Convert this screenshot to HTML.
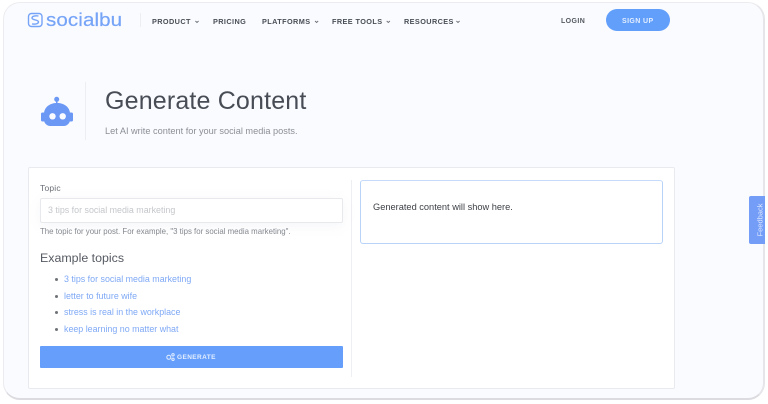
<!DOCTYPE html>
<html lang="en">
<head>
<meta charset="utf-8">
<title>Generate Content - SocialBu</title>
<style>
html,body{margin:0;padding:0;width:768px;height:404px;overflow:hidden;background:#fff}
body{font-family:"Liberation Sans",sans-serif;position:relative}
#wrap{position:absolute;left:0;top:0;width:768px;height:404px;filter:blur(.35px)}
.t{position:absolute;white-space:nowrap;line-height:1}
.box{position:absolute;box-sizing:border-box}
.nav{font-size:7.3px;font-weight:700;letter-spacing:.4px;color:#4a4f57;top:17.500px}
.li{font-size:8.900px;color:#7fa9f5;left:64px}
.dot{position:absolute;left:55px;width:3px;height:3px;border-radius:50%;background:#6f7378}
</style>
</head>
<body>
<div id="wrap">
<div class="box" style="left:3px;top:2px;width:762px;height:398px;border-radius:17px;background:#fafbff;border:1px solid #ececf0;border-bottom:2px solid #dcdce0;border-right:2px solid #e6e6ea"></div>

<svg class="box" style="left:27px;top:12px" width="17" height="16" viewBox="0 0 17 16" fill="none" stroke="#76a4f7" stroke-width="1.400">
<rect x="1.500" y="1.500" width="13.500" height="13" rx="3"/>
<path d="M11.500 4C8.500 3.400 5 4 5 6C5 8.400 11.500 7.400 11.500 9.900C11.500 11.900 8 12.500 5 11.900"/>
</svg>
<div class="t" style="left:45.500px;top:10.500px;font-size:18px;letter-spacing:.1px;color:#76a4f7;-webkit-text-stroke:.2px #76a4f7;transform-origin:left center;transform:scaleX(1.140)">socialbu</div>
<div class="box" style="left:140px;top:13px;width:1px;height:14px;background:#eceef3"></div>

<div class="t nav" style="left:152px">PRODUCT</div>
<div class="t nav" style="left:213px">PRICING</div>
<div class="t nav" style="left:262px">PLATFORMS</div>
<div class="t nav" style="left:332px">FREE TOOLS</div>
<div class="t nav" style="left:404px">RESOURCES</div>
<svg class="box" style="left:0;top:0" width="768" height="40" fill="none" stroke="#6b7078" stroke-width=".9">
<path d="M195.400 21l1.600 1.500L198.600 21M315 21l1.600 1.500L318.200 21M386.700 21l1.600 1.500L389.900 21M456.400 21l1.600 1.500L459.600 21"/>
</svg>
<div class="t" style="left:561px;top:17.500px;font-size:7px;font-weight:700;letter-spacing:.4px;color:#555a62">LOGIN</div>
<div class="box" style="left:606px;top:9px;width:64px;height:22px;border-radius:11px;background:#629ffa"></div>
<div class="t" style="left:622px;top:17.500px;font-size:7px;font-weight:700;letter-spacing:.4px;color:#e4eeff">SIGN UP</div>

<svg class="box" style="left:40px;top:96px" width="34" height="32" viewBox="0 0 34 32">
<circle cx="16.700" cy="3.300" r="2.500" fill="#6b98f5"/>
<rect x="16" y="3" width="1.500" height="6" fill="#6b98f5"/>
<path d="M4 18C4 11 10 7 17 7C24 7 30 11 30 18V24C30 27 27 30 24 30H10C7 30 4 27 4 24Z" fill="#6b98f5"/>
<rect x="1" y="16.500" width="4" height="9" rx="1.500" fill="#6b98f5"/>
<rect x="29" y="16.500" width="4" height="9" rx="1.500" fill="#6b98f5"/>
<circle cx="12.500" cy="20.300" r="3.200" fill="#fafbff"/>
<circle cx="22.700" cy="20.300" r="3.200" fill="#fafbff"/>
</svg>
<div class="box" style="left:85px;top:82px;width:1px;height:58px;background:#eceef3"></div>
<div class="t" style="left:105px;top:89px;font-size:25px;letter-spacing:.17px;color:#474c55">Generate Content</div>
<div class="t" style="left:105px;top:127px;font-size:9.200px;color:#8b8f96">Let AI write content for your social media posts.</div>

<div class="box" style="left:28px;top:167px;width:647px;height:222px;background:#fff;border:1px solid #e9eaf0;border-radius:2px"></div>
<div class="box" style="left:351px;top:180px;width:1px;height:197px;background:#eeeff3"></div>

<div class="t" style="left:40px;top:184px;font-size:8.500px;letter-spacing:.2px;color:#6a6e75">Topic</div>
<div class="box" style="left:40px;top:198px;width:303px;height:25px;background:#fff;border:1px solid #e8e9ed;border-radius:2px;box-shadow:0 3px 12px rgba(200,205,220,.18)"></div>
<div class="t" style="left:48px;top:206px;font-size:8.900px;color:#c5c7cb">3 tips for social media marketing</div>
<div class="t" style="left:40px;top:228px;font-size:7.850px;color:#84888e">The topic for your post. For example, "3 tips for social media marketing".</div>
<div class="t" style="left:40px;top:252px;font-size:12.400px;color:#565a62">Example topics</div>

<div class="dot" style="top:278px"></div><div class="t li" style="top:275px">3 tips for social media marketing</div>
<div class="dot" style="top:295px"></div><div class="t li" style="top:291.500px">letter to future wife</div>
<div class="dot" style="top:311px"></div><div class="t li" style="top:308px">stress is real in the workplace</div>
<div class="dot" style="top:328px"></div><div class="t li" style="top:324.500px">keep learning no matter what</div>

<div class="box" style="left:40px;top:346px;width:303px;height:22px;background:#659ffb;border-radius:1px"></div>
<svg class="box" style="left:166px;top:353px" width="9" height="8" viewBox="0 0 9 8" fill="none" stroke="#e4eeff" stroke-width="1">
<circle cx="2.800" cy="4.300" r="2"/><circle cx="7" cy="1.800" r="1.200"/><circle cx="7" cy="6.300" r="1.200"/>
</svg>
<div class="t" style="left:177px;top:354.500px;font-size:6.500px;font-weight:700;letter-spacing:.4px;color:#e4eeff">GENERATE</div>

<div class="box" style="left:360px;top:180px;width:303px;height:64px;background:#fff;border:1px solid #b9d3f8;border-top:1.500px solid #c6dbfb;border-radius:3px"></div>
<div class="t" style="left:373px;top:203px;font-size:9.250px;color:#3d4046">Generated content will show here.</div>

<div class="box" style="left:749px;top:196px;width:16px;height:48px;background:#739df7;border-radius:2px 0 0 2px"></div>
<div class="t" style="left:760px;top:219.500px;font-size:7.500px;color:#dfe8ff;transform:translate(-50%,-50%) rotate(-90deg)">Feedback</div>
</div>
</body>
</html>
